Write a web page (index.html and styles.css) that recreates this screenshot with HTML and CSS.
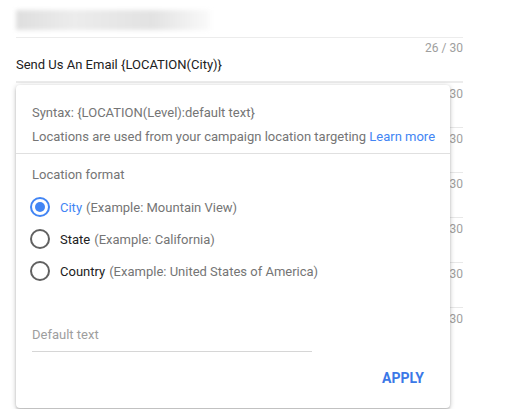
FILE: index.html
```html
<!DOCTYPE html>
<html lang="en">
<head>
    <meta charset="UTF-8">
    <meta name="viewport" content="width=device-width, initial-scale=1.0">
    <title>Location insertion</title>
    <link rel="stylesheet" href="styles.css">
</head>
<body>

    <div class="editor">
        <div class="blurred-title"></div>

        <div class="field first">
            <div class="count">26 / 30</div>
            <div class="value">Send Us An Email {LOCATION(City)}</div>
        </div>
        <div class="field"><div class="count">0 / 30</div></div>
        <div class="field"><div class="count">0 / 30</div></div>
        <div class="field"><div class="count">0 / 30</div></div>
        <div class="field"><div class="count">0 / 30</div></div>
        <div class="field"><div class="count">0 / 30</div></div>
        <div class="field last"><div class="count">0 / 30</div></div>

        <div class="popup">
            <div class="popup-head">
                <div>Syntax: {LOCATION(Level):default text}</div>
                <div>Locations are used from your campaign location targeting <a href="#" class="link">Learn more</a></div>
            </div>
            <div class="popup-body">
                <div class="label">Location format</div>
                <label class="option">
                    <span class="radio checked"></span>
                    <span class="name active">City</span>
                    <span class="example">(Example: Mountain View)</span>
                </label>
                <label class="option">
                    <span class="radio"></span>
                    <span class="name">State</span>
                    <span class="example">(Example: California)</span>
                </label>
                <label class="option">
                    <span class="radio"></span>
                    <span class="name">Country</span>
                    <span class="example">(Example: United States of America)</span>
                </label>

                <div class="text-field">
                    <input type="text" placeholder="Default text">
                </div>
            </div>
            <div class="popup-foot">
                <button class="apply-btn">APPLY</button>
            </div>
        </div>
    </div>

</body>
</html>
```

FILE: styles.css
```css
html, body {
    height: 409px;
}
body {
    font-family: Roboto, "Liberation Sans", Arial, sans-serif;
    background-color: #fff;
    margin: 0;
    padding: 0;
    overflow: hidden;
}
.editor {
    position: relative;
    width: 447px;
    height: 399px;
    margin-left: 16px;
    padding-top: 10px;
}
.blurred-title {
    width: 194px;
    height: 20px;
    margin-bottom: 7px;
    background: linear-gradient(90deg, #dedede 0%, #ececec 30%, #e2e2e2 70%, #fafafa 100%);
    filter: blur(2px);
}
.field {
    height: 44px;
    border-bottom: 1px solid #e8e8e8;
}
.field.first {
    height: 43px;
    border-top: 1px solid #ececec;
    border-bottom: 2px solid #ececec;
}
.field.last {
    border-bottom: none;
}
.count {
    text-align: right;
    font-size: 12px;
    line-height: 16px;
    color: #9e9e9e;
    padding-top: 3px;
}
.field.first .count {
    padding-top: 2px;
}
.value {
    font-size: 13px;
    line-height: 16px;
    color: #212121;
    margin-top: 1px;
}
.popup {
    position: absolute;
    left: 0;
    top: 85px;
    width: 434px;
    height: 323px;
    background: #fff;
    border-radius: 4px;
    box-shadow: 0 1px 5px rgba(0,0,0,0.25), 0 2px 2px rgba(0,0,0,0.12);
    color: #757575;
    font-size: 13px;
}
.popup-head {
    padding: 16px 16px 4px;
    line-height: 24px;
    white-space: nowrap;
    border-bottom: 1px solid #e0e0e0;
}
.link {
    color: #4285f4;
    text-decoration: none;
}
.popup-body {
    padding: 9px 16px 0;
}
.label {
    line-height: 24px;
    margin-bottom: 4px;
}
.option {
    display: flex;
    align-items: center;
    height: 32px;
    margin-left: -2px;
}
.radio {
    width: 16px;
    height: 16px;
    border: 2px solid #616161;
    border-radius: 50%;
    margin-right: 10px;
    position: relative;
}
.radio.checked {
    border-color: #4285f4;
}
.radio.checked::after {
    content: "";
    position: absolute;
    left: 3px;
    top: 3px;
    width: 10px;
    height: 10px;
    border-radius: 50%;
    background: #4285f4;
}
.name {
    color: #212121;
    margin-right: 4px;
}
.name.active {
    color: #4285f4;
}
.text-field {
    width: 280px;
    margin-top: 32px;
    border-bottom: 1px solid #d6d6d6;
}
.text-field input {
    display: block;
    width: 100%;
    border: none;
    outline: none;
    padding: 8px 0 8px;
    font-family: inherit;
    font-size: 13px;
    line-height: 16px;
    color: #212121;
}
.text-field input::placeholder {
    color: #9e9e9e;
}
.popup-foot {
    display: flex;
    justify-content: flex-end;
    padding: 14px 18px 0 0;
}
.apply-btn {
    background: none;
    border: none;
    padding: 4px 8px;
    font-family: inherit;
    font-size: 14px;
    font-weight: bold;
    color: #3b78e7;
    line-height: 16px;
    cursor: pointer;
}
```
